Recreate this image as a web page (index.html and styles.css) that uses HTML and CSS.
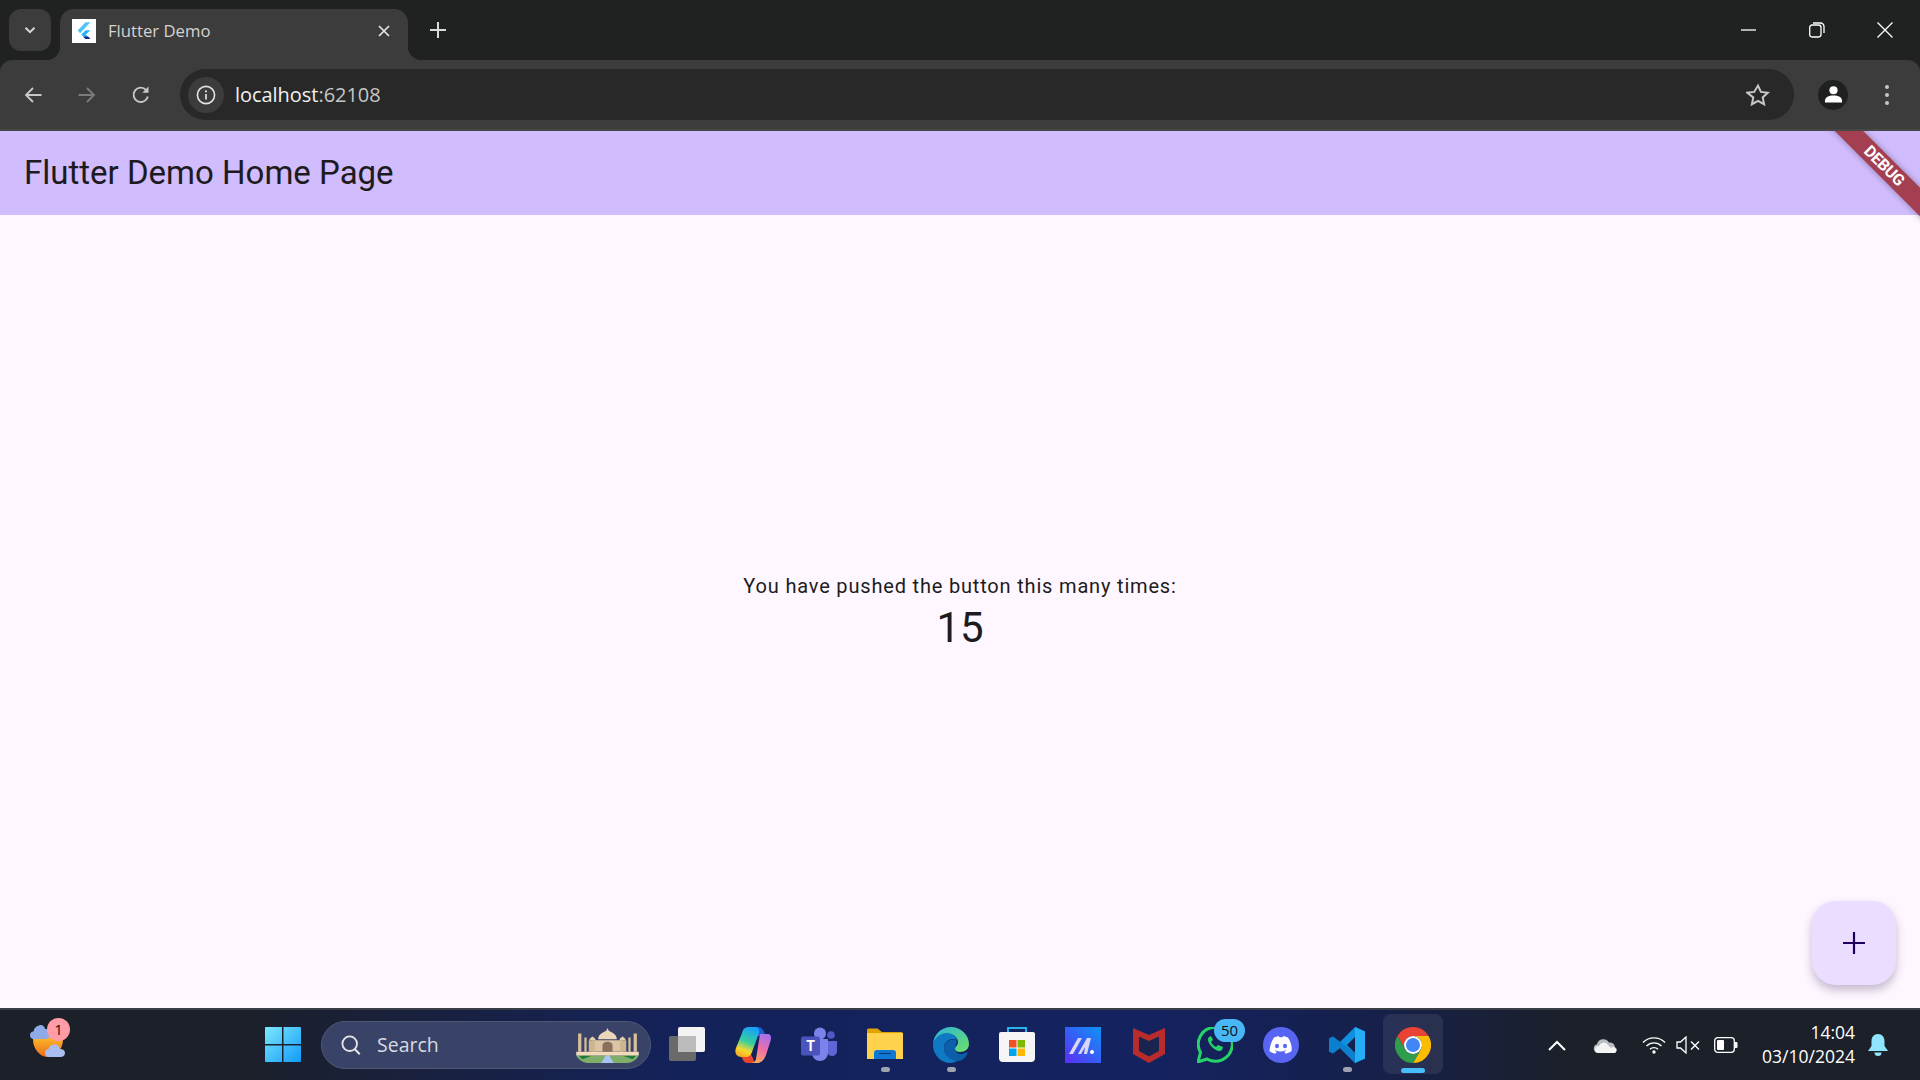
FILE: index.html
```html
<!DOCTYPE html>
<html lang="en">
<head>
<meta charset="utf-8">
<title>Flutter Demo</title>
<link rel="stylesheet" href="styles.css">
</head>
<body>
<div class="screen">
  <header class="chrome">
    <div class="tabstrip">
      <div class="tabsearch"><svg class="ic14" viewBox="0 0 14 14"><path d="M2.500 4.800 7 9.200l4.500-4.400" fill="none" stroke="#d6d6d6" stroke-width="2"/></svg></div>
      <div class="tab">
        <span class="favicon"><svg viewBox="-3 -3 30 30" width="24" height="24"><path d="M14 1 4 11.500l3.200 3.200L20 1z" fill="#4fc3f7"/><path d="M14 11 8.500 16.500l5.500 5.500h6l-5.700-5.600 5.700-5.400z" fill="#29b6f6"/><path d="m11 19.200 3 2.800h6l-3-3z" fill="#1a237e"/></svg></span>
        <span class="tabtitle">Flutter Demo</span>
        <svg class="tabclose" viewBox="0 0 12 12"><path d="m1 1 10 10M11 1 1 11" stroke="#e3e3e3" stroke-width="1.700" fill="none"/></svg>
      </div>
      <svg class="newtab" viewBox="0 0 16 16"><path d="M8 0v16M0 8h16" stroke="#dcdcdc" stroke-width="2" fill="none"/></svg>
      <div class="winctl">
        <svg class="wbtn" viewBox="0 0 16 16"><path d="M0 8h15" stroke="#fff" stroke-width="1.300"/></svg>
        <svg class="wbtn" viewBox="0 0 16 16"><rect x="0.700" y="3" width="11.300" height="12" rx="2.400" fill="none" stroke="#fff" stroke-width="1.300"/><path d="M4 1h7.500A3.500 3.500 0 0 1 15 4.500V11" fill="none" stroke="#fff" stroke-width="1.300"/></svg>
        <svg class="wbtn" viewBox="0 0 16 16"><path d="m.5.500 15 15M15.500.500l-15 15" stroke="#fff" stroke-width="1.300" fill="none"/></svg>
      </div>
    </div>
    <div class="toolbar">
      <svg class="navic" viewBox="0 0 20 20"><path d="M18.500 10H3M10 3l-7 7 7 7" fill="none" stroke="#c7c7c7" stroke-width="1.900"/></svg>
      <svg class="navic" viewBox="0 0 20 20"><path d="M1.500 10H17M10 3l7 7-7 7" fill="none" stroke="#7b7b7b" stroke-width="1.900"/></svg>
      <svg class="navic" viewBox="0 0 20 20"><path d="M16.800 11.500A7.200 7.200 0 1 1 15 4.800" fill="none" stroke="#c7c7c7" stroke-width="1.900"/><path d="M17.500 1.500v6.200h-6.200z" fill="#c7c7c7"/></svg>
      <div class="omnibox">
        <span class="infochip"><svg viewBox="0 0 20 20" width="20" height="20"><circle cx="10" cy="10" r="8.600" fill="none" stroke="#e3e3e3" stroke-width="1.600"/><path d="M10 9v5.500" stroke="#e3e3e3" stroke-width="1.700"/><circle cx="10" cy="6.300" r="1.100" fill="#e3e3e3"/></svg></span>
        <span class="url">localhost<span class="port">:62108</span></span>
        <svg class="star" viewBox="0 0 24 24"><path d="m12 2.600 2.900 6.300 6.900.8-5.100 4.700 1.400 6.800-6.100-3.400-6.100 3.400 1.400-6.800L1.300 9.700l6.900-.8z" fill="none" stroke="#c7c7c7" stroke-width="2"/></svg>
      </div>
      <span class="avatar"><svg viewBox="0 0 20 20" width="20" height="20"><circle cx="10" cy="5.500" r="4.300" fill="#fff"/><path d="M1 18.500v-2c0-3.500 4-5.500 9-5.500s9 2 9 5.500v2z" fill="#fff"/></svg></span>
      <svg class="kebab" viewBox="0 0 4 20"><circle cx="2" cy="2" r="2" fill="#c7c7c7"/><circle cx="2" cy="10" r="2" fill="#c7c7c7"/><circle cx="2" cy="18" r="2" fill="#c7c7c7"/></svg>
    </div>
  </header>

  <main class="app">
    <div class="appbar"><h1 class="apptitle">Flutter Demo Home Page</h1></div>
    <div class="appbody">
      <p class="pushed">You have pushed the button this many times:</p>
      <p class="count">15</p>
    </div>
    <div class="fab"><svg viewBox="0 0 22 22" width="22" height="22"><path d="M11 0v22M0 11h22" stroke="#21005d" stroke-width="2.200" fill="none"/></svg></div>
    <div class="ribbon"><span>DEBUG</span></div>
  </main>

  <footer class="taskbar">
    <div class="weather">
      <svg viewBox="0 0 38 36" width="38" height="36"><defs><linearGradient id="sun" x1="0" y1="0" x2="0" y2="1"><stop offset="0" stop-color="#fbc02d"/><stop offset="1" stop-color="#ef6c18"/></linearGradient></defs><path d="M3 12h30v4a15 18 0 0 1-30 0z" fill="url(#sun)"/><path d="M4 16c-3 0-4-2-4-4s1.500-3.500 3.500-3.500C4 5 6 3 9 2.500 12 1 15 4 15 6c3 0 5 2 5 5s-2 5-5 5z" fill="#8faae8"/><path d="M19 34c-3 0-4-2-4-4 0-2.500 2-4 3.500-4 .5-3 3-4.500 6-4.500s5 2 5.500 4.500c3 0 5 1.500 5 4s-2 4-4.500 4z" fill="#a8bdf0"/></svg>
      <span class="wbadge">1</span>
    </div>
    <div class="center">
      <svg class="start" viewBox="0 0 36 36"><defs><linearGradient id="w1" x1="0" y1="0" x2="1" y2="1"><stop offset="0" stop-color="#7de8fb"/><stop offset="1" stop-color="#0f9bfb"/></linearGradient></defs><path d="M1 0h16v17H0V1a1 1 0 0 1 1-1zM18.500 0H35a1 1 0 0 1 1 1v16H18.500zM0 18.500h17V35H1a1 1 0 0 1-1-1zM18.500 18.500H36V34a1 1 0 0 1-1 1H18.500z" fill="url(#w1)"/></svg>
      <div class="search">
        <svg class="searchic" viewBox="0 0 20 20"><circle cx="8.700" cy="8.700" r="7.300" fill="none" stroke="#e6e6e6" stroke-width="1.800"/><path d="m13.700 14 5 5.200" stroke="#e6e6e6" stroke-width="2"/></svg>
        <span class="searchtext">Search</span>
        <svg class="taj" viewBox="0 0 52 40" width="65" height="38" preserveAspectRatio="none">
          <path d="M1 31h50c-2 5-6 8-10 8H11c-4 0-8-3-10-8z" fill="#7fae6b"/>
          <path d="M3 31h11l-8 4zM49 31H38l8 4z" fill="#1f7a3f"/>
          <path d="M21 39l3.500-8h3l3.500 8z" fill="#a9c4f0"/>
          <path d="M1 27h50v4H1z" fill="#f0dcba"/>
          <path d="M14 15h24v12H14z" fill="#dcc5a2"/>
          <path d="M18.500 14c0-5 3.500-7 6.500-9l1-3 1 3c3 2 6.500 4 6.500 9z" fill="#ecd8b8"/>
          <path d="M11.500 15c0-2 1.500-3 2.500-4 1 1 2.500 2 2.500 4zM35.500 15c0-2 1.500-3 2.500-4 1 1 2.500 2 2.500 4z" fill="#e4cfae"/>
          <path d="M11 15h5v12h-5zM36 15h5v12h-5z" fill="#cdb492"/>
          <path d="M22 27v-7c0-2 2-3.500 4-3.500s4 1.500 4 3.500v7z" fill="#8a6f5c"/>
          <path d="M2.500 8h2.600v19H2.500zM7.500 12h1.800v15H7.500zM42.700 12h1.800v15h-1.800zM46.900 8h2.600v19h-2.600z" fill="#d8bf9b"/>
        </svg>
      </div>
      <div class="apps">
        <span class="app-ic"><svg viewBox="0 0 36 36" width="36" height="36"><rect x="0" y="9" width="27" height="25" rx="2" fill="#6a6a6a"/><rect x="9" y="0" width="27" height="25" rx="2" fill="#f4f4f4"/><rect x="9" y="9" width="18" height="16" fill="#bcbcbc"/></svg></span>
        <span class="app-ic"><svg viewBox="0 0 36 36" width="36" height="36"><defs><linearGradient id="cpl" x1=".5" y1="0" x2=".2" y2="1"><stop offset="0" stop-color="#1aa3f2"/><stop offset=".45" stop-color="#35cf9e"/><stop offset=".75" stop-color="#f6d92e"/><stop offset="1" stop-color="#f5a623"/></linearGradient><linearGradient id="cpr" x1=".7" y1="0" x2=".3" y2="1"><stop offset="0" stop-color="#a86fe8"/><stop offset=".5" stop-color="#ef6fa8"/><stop offset="1" stop-color="#fbab5a"/></linearGradient></defs><path d="M14 0h8c4 0 6 2 7 5l2 4h-8z" fill="#1f5fd8"/><path d="M11 36h-0c-3 0-5-2-6-5l-1-4h10l4 9z" fill="#e8452f" transform="translate(2 0)"/><path d="M14 0C10 0 8 2 7 6L1 21c-2 5 1 9 5 9h5c3 0 5-2 6-5l7-19c1-3-1-6-4-6z" fill="url(#cpl)"/><path d="M22 36h-6c3 0 5-2 6-5l7-19c1-3 2-5 5-5 2 1 2.500 4 1.500 7L31 28c-2 5-5 8-9 8z" fill="url(#cpr)"/><path d="M25 7h7c2 0 3 2 3 5l-5 17c-1 4-4 7-8 7h-6c3 0 5-2 5-4z" fill="url(#cpr)"/></svg></span>
        <span class="app-ic"><svg viewBox="0 0 36 36" width="36" height="36"><circle cx="19" cy="6.500" r="6" fill="#7b83eb"/><circle cx="30" cy="8" r="3.800" fill="#5059c9"/><path d="M11 12h16v14a8 8 0 0 1-16 0z" fill="#7b83eb"/><path d="M27 14h9v10a5 5 0 0 1-9 3z" fill="#5e66d6"/><rect x="0" y="9.500" width="19" height="19" rx="2" fill="#4b53bc"/><text x="9.500" y="24" class="teams-t">T</text></svg></span>
        <span class="app-ic dot"><svg viewBox="0 0 36 36" width="36" height="36"><path d="M0 3a1.500 1.500 0 0 1 1.500-1.500h9L15 5h19a2 2 0 0 1 2 2v6H0z" fill="#e2a300"/><path d="M0 6h36v26H0z" fill="#ffd24d"/><path d="M7 32v-6a3 3 0 0 1 3-3h16a3 3 0 0 1 3 3v6z" fill="#0f78d4"/><path d="M12 26.500h12" stroke="#063f78" stroke-width="1.200"/></svg></span>
        <span class="app-ic dot"><svg viewBox="0 0 36 36" width="36" height="36"><defs><linearGradient id="e1" x1="0" y1="0" x2="1" y2="1"><stop offset="0" stop-color="#2bb3d8"/><stop offset="1" stop-color="#6ee068"/></linearGradient></defs><path d="M0 18C0 8 8 0 18 0c10 0 18 8 18 17 0 5-4 8-9 8-3 0-5-1-5-3 0-3 3-3 3-7 0-4-4-8-9-8C8 7 0 12 0 18z" fill="url(#e1)"/><path d="M0 18C1 10 8 6 14 6c5 0 9 3 10 7-6-3-13 1-13 8 0 7 7 13 15 12-3 2-6 3-9 3C8 36 0 28 0 18z" fill="#0f79c4"/><path d="M11 21c0-6 6-10 12-8 2 3-1 5-1 9 0 3 3 5 7 5l6-2c-2 6-6 9-10 9-8 0-14-6-14-13z" fill="#0b5ea8"/></svg></span>
        <span class="app-ic"><svg viewBox="0 0 36 36" width="36" height="36"><path d="M9 6V1h18v5" fill="none" stroke="#27b4e8" stroke-width="2"/><path d="M2 5h32a2 2 0 0 1 2 2v24a4 4 0 0 1-4 4H4a4 4 0 0 1-4-4V7a2 2 0 0 1 2-2z" fill="#f5f5f5"/><path d="M10 13h7.500v7.500H10z" fill="#f25022"/><path d="M18.500 13H26v7.500h-7.500z" fill="#7fba00"/><path d="M10 21.500h7.500V29H10z" fill="#00a4ef"/><path d="M18.500 21.500H26V29h-7.500z" fill="#ffb900"/></svg></span>
        <span class="app-ic"><svg viewBox="0 0 36 36" width="36" height="36"><defs><linearGradient id="mx" x1="0" y1="1" x2="1" y2="0"><stop offset="0" stop-color="#5b2df5"/><stop offset="1" stop-color="#0e93f5"/></linearGradient></defs><rect width="36" height="36" fill="url(#mx)"/><path d="m4 27 9-16h4l-9 16zM13 27l9-16h4l-4 16h-3l1-7-4 7z" fill="#d9d6f7"/><circle cx="27" cy="25" r="2" fill="#fff"/></svg></span>
        <span class="app-ic"><svg viewBox="0 0 32 36" width="32" height="36"><path d="M0 1l16 7 16-7v26l-16 9L0 27z" fill="#b92c2c"/><path d="M6 9.500 16 14l10-4.500v14.500l-10 5.500-10-5.500z" fill="#1a2450"/></svg></span>
        <span class="app-ic"><svg viewBox="0 0 36 36" width="36" height="36"><path d="M1 35l2.500-9.500A17 17 0 1 1 10 32z" fill="none" stroke="#25d366" stroke-width="3"/><path d="M12 10c-2 2-1 6 3 10s8 5 10 3l1-3-5-2-2 2c-2-1-4-3-5-5l2-2-2-4z" fill="#25d366"/></svg><span class="wabadge">50</span></span>
        <span class="app-ic"><svg viewBox="0 0 36 36" width="36" height="36"><circle cx="18" cy="18" r="18" fill="#5865f2"/><path d="M11 10.500c2-.9 4-1.300 5-1.300l.5 1.100c1-.1 2-.1 3 0l.5-1.100c1 0 3 .4 5 1.300 3 4.500 4 9 3.600 13.500-2 1.500-4 2.300-6 2.700l-1.300-2c.7-.3 1.400-.6 2-1l-.5-.4c-3.500 1.600-7.100 1.600-10.600 0l-.5.4c.6.400 1.300.7 2 1l-1.300 2c-2-.4-4-1.200-6-2.700C7 19.500 8 15 11 10.500z" fill="#fff"/><ellipse cx="14" cy="19" rx="2" ry="2.300" fill="#5865f2"/><ellipse cx="22" cy="19" rx="2" ry="2.300" fill="#5865f2"/></svg></span>
        <span class="app-ic dot"><svg viewBox="0 0 36 36" width="36" height="36"><path d="M26 0 36 4.500v27L26 36 11 21l-7 5.500-4-2v-13l4-2 7 5.500zm0 10-8 8 8 8z" fill="#0f8fe0"/><path d="M26 0 36 4.500v27L26 36z" fill="#23aef5"/><path d="M0 11.500l4-2 22 16.500v10L11 21l-7 5.500-4-2z" fill="#0a75c2" opacity=".6"/></svg></span>
        <span class="app-ic active"><svg viewBox="0 0 36 36" width="36" height="36"><path d="M33.600 9A18 18 0 0 0 2.400 9l7.800 13.500A9 9 0 0 1 18 9z" fill="#ea4335"/><path d="M33.600 9H18a9 9 0 0 1 7.800 13.500L18 36A18 18 0 0 0 33.600 9z" fill="#fbbc04"/><path d="M18 36l7.800-13.500a9 9 0 0 1-15.600 0L2.400 9A18 18 0 0 0 18 36z" fill="#2f9e4c"/><circle cx="18" cy="18" r="9" fill="#fff"/><circle cx="18" cy="18" r="7" fill="#4285f4"/></svg></span>
      </div>
    </div>
    <div class="tray">
      <svg class="t-chev" viewBox="0 0 18 11"><path d="M1 10 9 2l8 8" fill="none" stroke="#fff" stroke-width="2"/></svg>
      <svg class="t-cloud" viewBox="0 0 24 15"><path d="M5 15a4.500 4.500 0 0 1-1-8.800A6.500 6.500 0 0 1 16 4.500a5 5 0 0 1 6 4.800A3 3 0 0 1 21 15z" fill="#b9bcc0"/><path d="M5 15a3.500 3.500 0 0 1 1-7 5 5 0 0 1 9-1l3 3a3 3 0 0 1 4 5z" fill="#f4f4f4"/></svg>
      <svg class="t-wifi" viewBox="0 0 24 18"><path d="M1 6.500a15.500 15.500 0 0 1 22 0M4.500 10a10.500 10.500 0 0 1 15 0M8 13.300a5.700 5.700 0 0 1 8 0" fill="none" stroke="#fff" stroke-width="1.400"/><circle cx="12" cy="16" r="1.700" fill="#fff"/></svg>
      <svg class="t-mute" viewBox="0 0 24 18"><path d="M1 6v6h3.500L10 17V1L4.500 6z" fill="none" stroke="#fff" stroke-width="1.300"/><path d="m15 5.500 8 8M23 5.500l-8 8" stroke="#fff" stroke-width="1.400"/></svg>
      <svg class="t-batt" viewBox="0 0 24 16"><rect x=".7" y=".7" width="19.600" height="14.600" rx="3" fill="none" stroke="#fff" stroke-width="1.300"/><rect x="3" y="3" width="7" height="10" rx="1" fill="#fff"/><path d="M21 5h1.500a1 1 0 0 1 1 1v4a1 1 0 0 1-1 1H21z" fill="#fff"/></svg>
      <div class="clock"><span>14:04</span><span>03/10/2024</span></div>
      <svg class="t-bell" viewBox="0 0 20 22"><path d="M10 0c4 0 6.500 3 6.500 7v5l3.500 5H0l3.500-5V7C3.500 3 6 0 10 0z" fill="#8fe5ff"/><path d="M6.500 18.500h7a3.500 3.500 0 0 1-7 0z" fill="#8fe5ff"/></svg>
    </div>
  </footer>
</div>
</body>
</html>
```
FILE: styles.css
```css
* { box-sizing: border-box; }
html, body { margin: 0; padding: 0; }
body { width: 1920px; height: 1080px; overflow: hidden; font-family: Roboto, "Liberation Sans", sans-serif; }
.screen { width: 1920px; height: 1080px; display: flex; flex-direction: column; }

.chrome { height: 131px; background: #202221; flex: none; }
.tabstrip { height: 60px; display: flex; align-items: flex-start; padding: 9px 0 0 9px; }
.tabsearch { width: 42px; height: 42px; border-radius: 12px; background: #3c3c3c; display: flex; align-items: center; justify-content: center; }
.ic14 { width: 14px; height: 14px; }
.tab { position: relative; width: 348px; height: 51px; margin-left: 9px; background: #3c3c3c; border-radius: 14px 14px 0 0; display: flex; align-items: center; padding: 0 0 8px 12px; }
.tab::before, .tab::after { content: ""; position: absolute; bottom: 0; width: 14px; height: 14px; }
.tab::before { left: -14px; background: radial-gradient(circle at 0 0, transparent 14px, #3c3c3c 14.500px); }
.tab::after { right: -14px; background: radial-gradient(circle at 100% 0, transparent 14px, #3c3c3c 14.500px); }
.favicon { width: 24px; height: 24px; background: #fff; flex: none; display: block; }
.tabtitle { margin-left: 12px; font: 16.700px "Open Sans", "Noto Sans", sans-serif; color: #d3d3d3; flex: 1; }
.tabclose { width: 12px; height: 12px; margin-right: 18px; }
.newtab { width: 16px; height: 16px; margin: 13px 0 0 22px; }
.winctl { margin-left: auto; display: flex; align-items: center; height: 42px; padding-right: 27px; gap: 52px; }
.wbtn { width: 16px; height: 16px; }

.toolbar { position: relative; height: 71px; background: #3c3c3c; border-radius: 12px 12px 0 0; border-bottom: 2px solid #474747; display: flex; align-items: center; padding: 0 28px 0 23px; }
.navic { width: 20px; height: 20px; margin-right: 34px; flex: none; }
.navic:nth-of-type(3) { margin-right: 29px; }
.omnibox { flex: 1; height: 51px; border-radius: 26px; background: #282828; display: flex; align-items: center; padding: 0 24px 0 8px; }
.infochip { width: 36px; height: 36px; border-radius: 50%; background: #3c3c3c; display: flex; align-items: center; justify-content: center; flex: none; }
.url { margin-left: 11px; font: 20px "Open Sans", "Noto Sans", sans-serif; color: #f1f1f1; flex: 1; letter-spacing: -.04px; }
.port { color: #c4c7c5; }
.star { width: 24px; height: 24px; }
.avatar { width: 30px; height: 30px; margin-left: 24px; border-radius: 50%; background: #1f2120; display: flex; align-items: center; justify-content: center; }
.avatar svg { width: 19px; height: 19px; }
.kebab { width: 4px; height: 20px; margin-left: 37px; margin-right: 3px; }

.app { position: relative; flex: 1; display: flex; flex-direction: column; background: #fef7ff; overflow: hidden; }
.appbar { height: 84px; background: #d1bcfd; display: flex; align-items: center; padding: 0 24px 2px; flex: none; }
.apptitle { margin: 0; font-weight: 400; font-size: 33px; color: #1d1b20; line-height: 1; }
.appbody { flex: 1; display: flex; flex-direction: column; align-items: center; justify-content: center; padding-top: 2px; color: #1d1b20; }
.pushed { margin: 0; font-size: 20px; letter-spacing: .82px; line-height: 28px; }
.count { margin: 2px 0 0; font-size: 42px; line-height: 52px; }
.fab { position: absolute; right: 24px; bottom: 23px; width: 84px; height: 84px; border-radius: 24px; background: #eaddff; box-shadow: 0 5px 10px rgba(60,40,90,.3); display: flex; align-items: center; justify-content: center; }
.ribbon { position: absolute; top: 0; right: 0; width: 100px; height: 100px; overflow: hidden; }
.ribbon span { position: absolute; display: block; width: 160px; height: 20px; left: -16px; top: 24.500px; background: #a43f52; color: #fff; font: 700 16px/20px Roboto, sans-serif; text-align: center; transform: rotate(45deg); box-shadow: 0 0 6px rgba(0,0,0,.35); letter-spacing: -.3px; }

.taskbar { height: 72px; flex: none; border-top: 2px solid #3b3d46; background: linear-gradient(90deg, #1c2029 0, #1c2029 12%, #14225a 35%, #142260 60%, #16204a 72%, #1c2029 82%, #1c2029 100%); display: flex; align-items: center; position: relative; }
.weather { position: relative; width: 38px; height: 36px; margin: 0 0 8px 30px; flex: none; }
.wbadge { position: absolute; top: -5px; left: 17px; width: 23px; height: 23px; border-radius: 50%; background: #ff9ca5; color: #111; font: 15px/23px "Open Sans", sans-serif; text-align: center; }
.center { display: flex; align-items: center; margin-left: 197px; flex: none; }
.start { width: 36px; height: 36px; }
.search { width: 330px; height: 48px; margin-left: 20px; border-radius: 24px; background: #394367; border: 1px solid #4e5773; display: flex; align-items: center; padding-left: 19px; }
.searchic { width: 20px; height: 20px; }
.searchtext { margin-left: 16px; padding-bottom: 2px; flex: 1; font: 19.500px "Open Sans", "Noto Sans", sans-serif; color: #d8dae2; }
.taj { margin-right: 10px; }
.apps { display: flex; margin-left: 18px; align-items: center; gap: 30px; }
.app-ic { position: relative; width: 36px; height: 36px; display: flex; justify-content: center; flex: none; }
.app-ic.dot::after { content: ""; position: absolute; left: 14px; bottom: -9px; width: 9px; height: 5px; border-radius: 3px; background: #9ea3b0; }
.app-ic.active::before { content: ""; position: absolute; left: -12px; top: -13px; width: 60px; height: 60px; border-radius: 8px; background: rgba(255,255,255,.08); }
.app-ic.active::after { content: ""; position: absolute; left: 6px; bottom: -10px; width: 24px; height: 5px; border-radius: 3px; background: #47bdfb; }
.app-ic svg { position: relative; }
.teams-t { font: 700 14px Roboto, sans-serif; fill: #fff; text-anchor: middle; }
.wabadge { position: absolute; left: 17px; top: -8px; width: 31px; height: 23px; border-radius: 12px; background: #47b8f5; color: #111; font: 15px/23px "Open Sans", sans-serif; text-align: center; }

.tray { margin-left: auto; display: flex; align-items: center; padding-right: 32px; }
.t-chev { width: 18px; height: 11px; }
.t-cloud { width: 24px; height: 15px; margin-left: 27px; }
.t-wifi { width: 24px; height: 18px; margin-left: 25px; }
.t-mute { width: 24px; height: 18px; margin-left: 10px; }
.t-batt { width: 24px; height: 16px; margin-left: 14px; }
.clock { display: flex; flex-direction: column; align-items: flex-end; margin-left: 24px; padding-bottom: 2px; color: #fff; font: 17.500px/24px "Open Sans", "Noto Sans", sans-serif; }
.t-bell { width: 20px; height: 22px; margin-left: 13px; }
```
